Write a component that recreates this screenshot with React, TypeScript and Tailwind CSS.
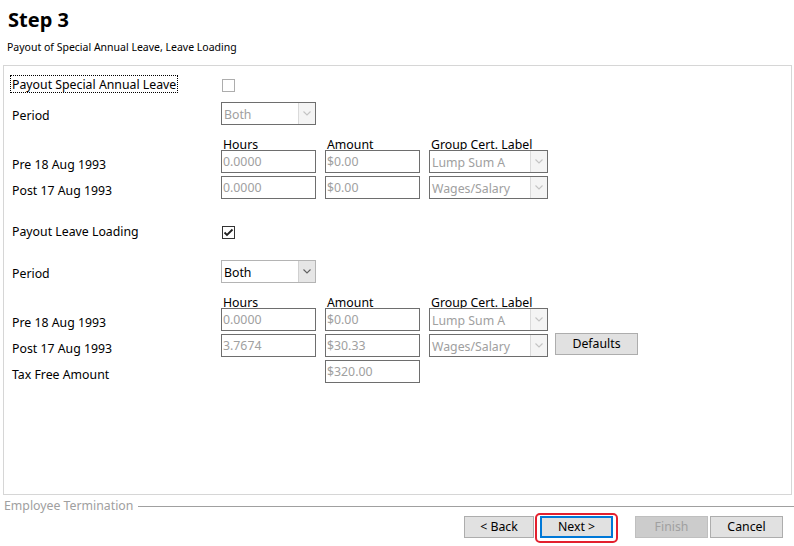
import React from 'react';

const Chevron = ({ color }: { color: string }) => (
  <svg width="8" height="5" viewBox="0 0 8 5" fill="none">
    <path d="M0.5 0.5L4 4L7.5 0.5" stroke={color} strokeWidth="1.1" />
  </svg>
);

const TextBox = ({ value }: { value: string }) => (
  <div className="h-[23px] w-[95px] border border-[#6e6e6e] bg-white pl-[1px] pt-[3px] leading-[16px] text-[#a0a0a0]">
    {value}
  </div>
);

const Combo = ({ value, disabled, wide }: { value: string; disabled?: boolean; wide?: boolean }) => (
  <div
    className={`flex h-[23px] border bg-white ${wide ? 'w-[119px]' : 'w-[95px]'} ${
      disabled ? 'border-[#6e6e6e]' : 'border-[#b4b4b4]'
    }`}
  >
    <div className={`flex-1 pl-[2px] pt-[4px] leading-[16px] ${disabled ? 'text-[#a0a0a0]' : 'text-black'}`}>
      {value}
    </div>
    <div
      className={`flex w-[17px] items-center justify-center border-l ${
        disabled ? 'border-[#dadada] bg-[#f4f4f4]' : 'border-[#d0d0d0] bg-[#e6e6e6]'
      }`}
    >
      <Chevron color={disabled ? '#c4c4c4' : '#606060'} />
    </div>
  </div>
);

const Checkbox = ({ checked }: { checked?: boolean }) => (
  <div
    className={`flex h-[13px] w-[13px] items-center justify-center border bg-white ${
      checked ? 'border-[#333333]' : 'border-[#adadad]'
    }`}
  >
    {checked && (
      <svg width="11" height="11" viewBox="0 0 11 11" fill="none">
        <path d="M1.5 5.5L4 8L9.5 2.5" stroke="#222222" strokeWidth="1.8" />
      </svg>
    )}
  </div>
);

// column captions sit right on top of the inputs, their descenders get cut
const HeaderRow = ({ className = '' }: { className?: string }) => (
  <div className={`flex h-[13px] overflow-hidden pl-[218px] leading-[16px] ${className}`}>
    <div className="w-[104px] pl-[1px]">Hours</div>
    <div className="w-[104px] pl-[1px]">Amount</div>
    <div className="pl-[1px]">Group Cert. Label</div>
  </div>
);

const InputRow = ({
  label,
  hours,
  amount,
  group,
  extra,
  className = '',
}: {
  label: string;
  hours?: string;
  amount: string;
  group?: string;
  extra?: React.ReactNode;
  className?: string;
}) => (
  <div className={`flex h-[23px] pl-[8px] ${className}`}>
    <div className="w-[209px] pt-[7px] leading-[16px]">{label}</div>
    <div className="w-[104px]">{hours !== undefined && <TextBox value={hours} />}</div>
    <div className="w-[104px]">
      <TextBox value={amount} />
    </div>
    {group && <Combo value={group} disabled wide />}
    {extra}
  </div>
);

export default function App() {
  return (
    <div className="relative h-[546px] w-[794px] overflow-hidden bg-white font-['Noto_Sans',sans-serif] text-[12.3px] text-black">
      {/* Header */}
      <div className="h-[39px] pl-[8px] pt-[8px] text-[20px] font-bold leading-[24px]">Step 3</div>
      <div className="h-[26px] pl-[7px] pt-[1px] text-[10.5px] leading-[14px]">
        Payout of Special Annual Leave, Leave Loading
      </div>

      {/* Form panel */}
      <div className="ml-[3px] h-[430px] w-[789px] border border-[#d6d6d6]">
        <div className="mt-[10px] flex h-[18px] items-center pl-[6px]">
          <div className="w-[212px]">
            <span className="inline-block border border-dotted border-black px-[1px] pt-[1px] leading-[15px]">
              Payout Special Annual Leave
            </span>
          </div>
          <Checkbox />
        </div>

        <div className="mt-[8px] flex h-[23px] pl-[8px]">
          <div className="w-[209px] pt-[6px] leading-[16px]">Period</div>
          <Combo value="Both" disabled />
        </div>

        <HeaderRow className="mt-[12px]" />
        <InputRow label="Pre 18 Aug 1993" hours="0.0000" amount="$0.00" group="Lump Sum A" />
        <InputRow className="mt-[3px]" label="Post 17 Aug 1993" hours="0.0000" amount="$0.00" group="Wages/Salary" />

        <div className="mt-[24px] flex h-[18px] items-center pl-[6px]">
          <div className="w-[212px]">
            <span className="inline-block border border-transparent px-[1px] pt-[1px] leading-[15px]">
              Payout Leave Loading
            </span>
          </div>
          <Checkbox checked />
        </div>

        <div className="mt-[19px] flex h-[23px] pl-[8px]">
          <div className="w-[209px] pt-[6px] leading-[16px]">Period</div>
          <Combo value="Both" />
        </div>

        <HeaderRow className="mt-[12px]" />
        <InputRow label="Pre 18 Aug 1993" hours="0.0000" amount="$0.00" group="Lump Sum A" />
        <InputRow
          className="mt-[3px]"
          label="Post 17 Aug 1993"
          hours="3.7674"
          amount="$30.33"
          group="Wages/Salary"
          extra={
            <button className="ml-[7px] h-[22px] w-[83px] -translate-y-[1px] border border-[#adadad] bg-[#e1e1e1] leading-[16px] text-black">
              Defaults
            </button>
          }
        />
        <InputRow className="mt-[3px]" label="Tax Free Amount" amount="$320.00" />
      </div>

      {/* Footer */}
      <div className="mt-[3px] flex h-[16px] items-center pl-[4px]">
        <span className="leading-[16px] text-[#a0a0a0]">Employee Termination</span>
        <div className="ml-[5px] h-px flex-1 bg-[#a0a0a0]" />
      </div>

      <div className="mt-[2px] flex h-[22px] justify-end pr-[11px]">
        <button className="h-[22px] w-[70px] border border-[#adadad] bg-[#e1e1e1] leading-[16px]">&lt; Back</button>
        <div className="relative ml-[6px]">
          <button className="h-[22px] w-[73px] border-2 border-[#0078d7] bg-[#e1e1e1] leading-[16px]">Next &gt;</button>
          <span className="pointer-events-none absolute -bottom-[5px] -left-[5px] -right-[5px] -top-[3px] rounded-[5px] border-2 border-[#e3202e]" />
        </div>
        <button className="ml-[22px] h-[22px] w-[73px] border border-[#bfbfbf] bg-[#cccccc] leading-[16px] text-[#a0a0a0]">
          Finish
        </button>
        <button className="ml-[2px] h-[22px] w-[73px] border border-[#adadad] bg-[#e1e1e1] leading-[16px]">Cancel</button>
      </div>
    </div>
  );
}
